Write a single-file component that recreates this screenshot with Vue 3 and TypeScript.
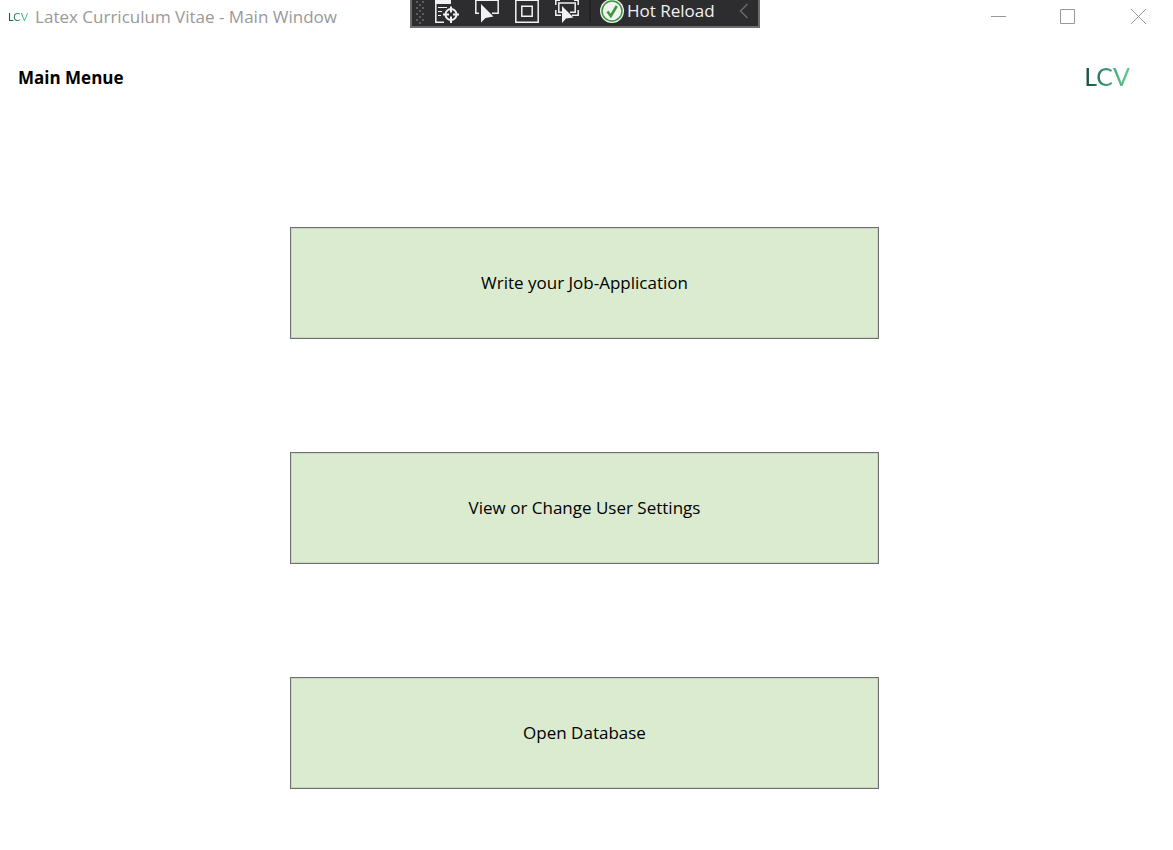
<script setup lang="ts">
interface MenuEntry {
  id: string
  label: string
}

const windowTitle = 'Latex Curriculum Vitae - Main Window'

const entries: MenuEntry[] = [
  { id: 'application', label: 'Write your Job-Application' },
  { id: 'settings', label: 'View or Change User Settings' },
  { id: 'database', label: 'Open Database' },
]

// Grip rows alternate between two outer dots and one centre dot.
const gripDots: { x: number; y: number }[] = []
for (let row = 0; row < 8; row++) {
  const columns = row % 2 === 0 ? [0, 6] : [3]
  for (const x of columns) {
    gripDots.push({ x, y: row * 3 + 1 })
  }
}
</script>

<template>
  <div class="window">
    <header class="titlebar">
      <div class="caption">
        <span class="logo logo-small" aria-hidden="true">LCV</span>
        <span class="title">{{ windowTitle }}</span>
      </div>

      <div class="debugbar" role="toolbar" aria-label="Debug tools">
        <svg class="grip" width="10" height="26" viewBox="0 0 10 26" aria-hidden="true">
          <rect v-for="(d, i) in gripDots" :key="i" :x="d.x" :y="d.y" width="2" height="2" fill="#5c5c60" />
        </svg>
        <button type="button" class="tool" aria-label="Go to Live Visual Tree">
          <svg width="26" height="26" viewBox="0 0 26 26" fill="none" stroke="#f1f1f1">
            <path d="M1 0H17V4H1z" fill="#f1f1f1" stroke="none" />
            <path d="M1.800 3V22.300H10" stroke-width="1.500" />
            <path d="M4 7.500H13M4 11.500H8M4 15.500H7" />
            <circle cx="17" cy="14.500" r="5.500" stroke-width="2" />
            <path d="M17 6.500V12.500M17 16.500V23M9 14.500H15M19 14.500H25" stroke-width="2" />
          </svg>
        </button>
        <button type="button" class="tool" aria-label="Select Element">
          <svg width="26" height="26" viewBox="0 0 26 26" fill="none">
            <path d="M5 13.300H1.800V.300H24.200V13.300H18" stroke="#f1f1f1" stroke-width="1.500" />
            <path d="M7 4V22.500L11.500 18L19.500 16.500z" fill="#f1f1f1" />
          </svg>
        </button>
        <button type="button" class="tool" aria-label="Display Layout Adorners">
          <svg width="26" height="26" viewBox="0 0 26 26" fill="none" stroke="#f1f1f1" stroke-width="1.500">
            <path d="M1.800 .300H24.200V22.300H1.800z" />
            <path d="M7.800 6.300H18.200V16.300H7.800z" />
          </svg>
        </button>
        <button type="button" class="tool" aria-label="Track Focused Element">
          <svg width="26" height="26" viewBox="0 0 26 26" fill="none">
            <path d="M1.800 0V5M24.200 0V5M1.800 10V15.300H7M24.200 10V15.300H18M1.800 .300H6M24.200 .300H20" stroke="#f1f1f1" stroke-width="1.500" />
            <path d="M9 12.300H4.800V3H21.200V12.300H16" stroke="#f1f1f1" stroke-width="1.500" />
            <path d="M8 6V23L12 18.500L19.500 17.500z" fill="#f1f1f1" />
          </svg>
        </button>
        <span class="divider"></span>
        <button type="button" class="reload">
          <svg width="24" height="24" viewBox="0 0 24 24" fill="none" aria-hidden="true">
            <circle cx="12" cy="11" r="12" fill="#f1f1f1" />
            <circle cx="12" cy="11" r="10" stroke="#339933" stroke-width="1.500" />
            <path d="M7.500 11.500L10.800 16L16.800 6" stroke="#339933" stroke-width="2.500" />
          </svg>
          <span>Hot Reload</span>
        </button>
        <button type="button" class="collapse" aria-label="Collapse toolbar">
          <svg width="10" height="16" viewBox="0 0 10 16" fill="none" stroke="#68686c" stroke-width="1.500">
            <path d="M8.500 1L1.500 8L8.500 15" />
          </svg>
        </button>
      </div>

      <div class="controls">
        <button type="button" aria-label="Minimize">
          <svg width="16" height="16" viewBox="0 0 16 16"><path d="M1 7.500H16" /></svg>
        </button>
        <button type="button" aria-label="Maximize">
          <svg width="16" height="16" viewBox="0 0 16 16"><path d="M.500 .500H14.500V14.500H.500z" /></svg>
        </button>
        <button type="button" aria-label="Close">
          <svg width="16" height="16" viewBox="0 0 16 16"><path d="M1 0L16 15M16 0L1 15" /></svg>
        </button>
      </div>
    </header>

    <div class="heading">
      <h1>Main Menue</h1>
      <span class="logo logo-large">LCV</span>
    </div>

    <main class="menu">
      <button v-for="entry in entries" :key="entry.id" type="button" class="entry">
        {{ entry.label }}
      </button>
    </main>
  </div>
</template>

<style>
body {
  margin: 0;
  background: #ffffff;
}
</style>

<style scoped>
.window {
  position: relative;
  box-sizing: border-box;
  min-height: 100vh;
  background: #ffffff;
  color: #000000;
  font-family: "Open Sans", "Noto Sans", sans-serif;
  font-size: 17px;
  line-height: 24px;
}

button {
  margin: 0;
  padding: 0;
  border: 0;
  background: none;
  color: inherit;
  font: inherit;
}

svg {
  display: block;
}

.titlebar {
  display: flex;
  justify-content: space-between;
  height: 34px;
}

.caption {
  display: flex;
  align-items: center;
  gap: 7px;
  padding-left: 8px;
  color: #999999;
  white-space: nowrap;
}

.logo {
  background: linear-gradient(90deg, #124a3a, #3a9a70 50%, #5bcf90);
  background-clip: text;
  -webkit-background-clip: text;
  color: transparent;
  font-family: Lato, sans-serif;
}

.logo-small {
  font-size: 11px;
}

.logo-large {
  font-size: 25px;
  line-height: 28px;
}

.debugbar {
  position: absolute;
  top: 0;
  right: 3px;
  left: 0;
  display: flex;
  box-sizing: border-box;
  width: 350px;
  height: 28px;
  margin: 0 auto;
  padding-left: 4px;
  border: 2px solid #6d6d6d;
  border-top: 0;
  overflow: hidden;
  background: #2d2d30;
  color: #f1f1f1;
}

.grip {
  margin-right: 8px;
}

.tool {
  display: flex;
  width: 26px;
  margin-right: 14px;
}

.divider {
  width: 2px;
  height: 22px;
  margin-right: 9px;
  margin-left: -5px;
  background: #222224;
}

.reload {
  display: flex;
  gap: 3px;
  line-height: 22px;
  white-space: nowrap;
}

.collapse {
  display: flex;
  margin-right: 9px;
  margin-left: auto;
  padding-top: 3px;
}

.controls {
  display: flex;
}

.controls button {
  display: grid;
  place-items: center;
  width: 70px;
}

.controls svg {
  fill: none;
  stroke: #999999;
}

.heading {
  display: flex;
  align-items: flex-end;
  justify-content: space-between;
  padding: 28px 43px 0 18px;
}

h1 {
  margin: 0;
  font-size: 17px;
  font-weight: 700;
}

.menu {
  display: flex;
  flex-direction: column;
  align-items: center;
  gap: 113px;
  padding: 137px 4px 60px 0;
}

.entry {
  box-sizing: border-box;
  width: 100%;
  max-width: 589px;
  height: 112px;
  border: 1px solid #707070;
  background: #daebd0;
  box-shadow: inset 0 0 0 1px #c9d5c2;
}
</style>
